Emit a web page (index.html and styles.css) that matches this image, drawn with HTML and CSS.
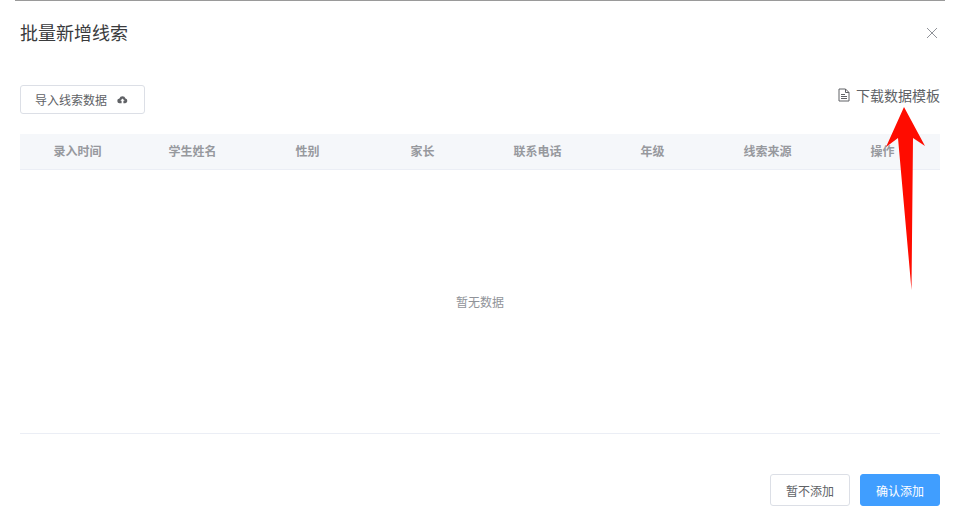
FILE: index.html
```html
<!DOCTYPE html>
<html lang="zh">
<head>
<meta charset="utf-8">
<title>批量新增线索</title>
<link rel="stylesheet" href="styles.css">
</head>
<body>
<div class="strip"></div>
<div class="dialog">
  <header class="head">
    <h1 class="title">批量新增线索</h1>
    <svg class="close" width="12" height="12" viewBox="0 0 12 12"><path d="M1 1L11 11M11 1L1 11" stroke="#909399" stroke-width="1" fill="none"/></svg>
  </header>
  <div class="toolbar">
    <button class="btn import"><span>导入线索数据</span>
      <svg class="cloud" width="11" height="9" viewBox="0 0 12 10"><path d="M3 9.2A2.6 2.6 0 0 1 2.6 4 3.5 3.5 0 0 1 9.3 3.9 2.7 2.7 0 0 1 9 9.2H7V6.5H8.400L6 4 3.600 6.500H5V9.200Z" fill="#606266"/></svg>
    </button>
    <a class="download">
      <svg width="12" height="14" viewBox="0 0 12 14"><path d="M1 1H7.500L11 4.500V13H1ZM7.500 1V4.500H11M3 6.500H7M3 8.500H9M3 10.500H9" stroke="#606266" stroke-width="1" fill="none"/></svg>
      <span>下载数据模板</span>
    </a>
  </div>
  <div class="table">
    <div class="thead">
      <span>录入时间</span><span>学生姓名</span><span>性别</span><span>家长</span><span>联系电话</span><span>年级</span><span>线索来源</span><span>操作</span>
    </div>
    <div class="empty">暂无数据</div>
  </div>
  <footer class="foot">
    <button class="btn cancel">暂不添加</button>
    <button class="btn primary">确认添加</button>
  </footer>
</div>
<svg class="arrow" width="44" height="186" viewBox="0 0 44 186"><path d="M18 0L39 39 27 31 25.500 183 12 31 0 40Z" fill="#ff0c00"/></svg>
</body>
</html>
```
FILE: styles.css
```css
* { box-sizing: border-box; }
html, body { margin: 0; height: 100%; background: #fff; overflow: hidden; }
body { font-family: "Noto Sans CJK SC", "Liberation Sans", sans-serif; color: #606266; position: relative; }
.strip { height: 1px; margin: 0 15px; background: #9a9a9a; }
.dialog { padding: 0 20px; }
.head { display: flex; justify-content: space-between; align-items: center; height: 65px; padding-bottom: 3px; }
.title { margin: 0; font-size: 18px; font-weight: 400; line-height: 24px; color: #3a3b3d; }
.close { margin: 2px 2px 0 0; }
.toolbar { display: flex; justify-content: space-between; align-items: flex-start; margin-top: 19px; height: 49px; }
.btn { font-family: inherit; font-size: 12px; border-radius: 3px; padding: 0; cursor: pointer; }
.import { width: 125px; height: 29px; display: flex; align-items: center; justify-content: flex-start; gap: 10px; padding-left: 14px; background: #fff; border: 1px solid #dcdfe6; color: #606266; }
.cloud { display: block; }
.download { display: flex; align-items: center; gap: 6px; font-size: 14px; line-height: 20px; color: #606266; }
.download svg { display: block; }
.thead { display: grid; grid-template-columns: repeat(8, 1fr); height: 36px; padding-bottom: 2px; align-items: center; background: #f5f7fa; border-bottom: 1px solid #ebeef5; font-size: 12px; font-weight: 700; color: #97999e; text-align: center; }
.empty { height: 264px; border-bottom: 1px solid #ebeef5; display: flex; align-items: center; justify-content: center; font-size: 12px; color: #909399; }
.foot { display: flex; justify-content: flex-end; gap: 10px; margin-top: 40px; }
.cancel, .primary { width: 80px; height: 32px; }
.cancel { background: #fff; border: 1px solid #dcdfe6; color: #606266; }
.primary { background: #409eff; border: 1px solid #409eff; color: #fff; }
.arrow { position: absolute; left: 886px; top: 107px; }
```
